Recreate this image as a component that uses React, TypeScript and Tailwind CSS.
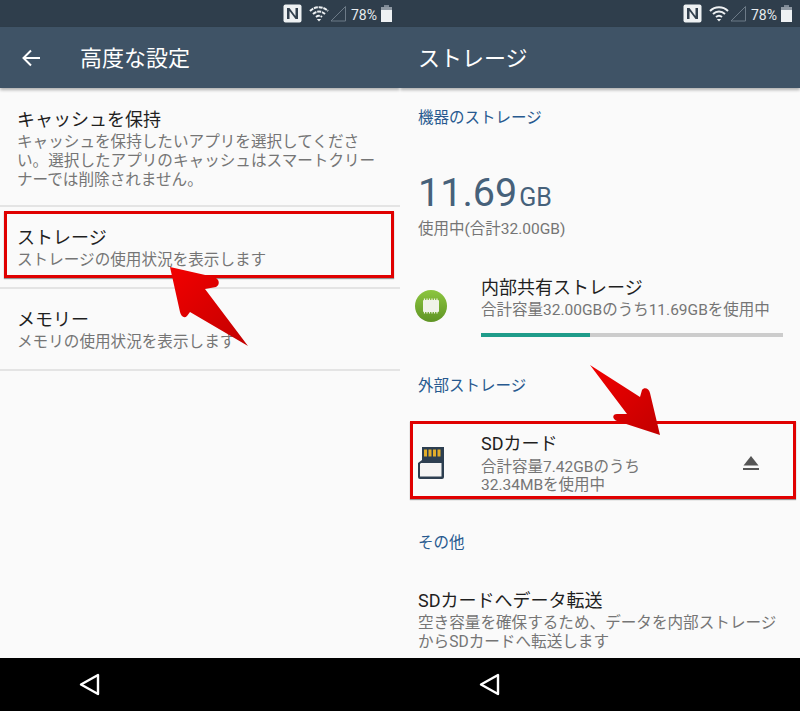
import React from "react";

const font = { fontFamily: 'Roboto, "Noto Sans CJK JP", sans-serif' };

function StatusBar({ dim }: { dim?: boolean }) {
  return (
    <div className="h-[27px] bg-[#2f3e4c] flex items-center justify-end pr-[8px] text-[#e8ecef]">
      <svg width="19" height="19" viewBox="0 0 19 19" className="mr-[7px]">
        <rect x="0.500" y="0.500" width="18" height="18" rx="2" fill="#eef1f3" />
        <path d="M4 15V4h2.500l6 8V4H15v11h-2.500l-6-8v8z" fill="#33414f" />
      </svg>
      <svg width="20" height="17" viewBox="0 0 20 17" className="mr-[1px]">
        <path d="M1 6c5-5 13-5 18 0M4 9c3.500-3.300 8.500-3.300 12 0M7 12c1.800-1.500 4.200-1.500 6 0" stroke="#eef1f3" strokeWidth="2" fill="none" strokeDasharray={dim ? "4 0.800" : undefined} />
        <path d="M7.800 14l2.200 2.500 2.200-2.500z" fill="#eef1f3" />
      </svg>
      <svg width="16" height="17" viewBox="0 0 16 17" className="mr-[5px]">
        <path d="M1 16L15.500 1.500V16z" stroke="#6c7a87" strokeWidth="1" fill="none" />
      </svg>
      <span className="text-[14px] leading-none mr-[4px] mt-[2px]">78%</span>
      <svg width="11" height="17" viewBox="0 0 11 17">
        <rect x="3" y="0" width="5" height="2" fill="#7d8894" />
        <rect x="0" y="2" width="11" height="3" fill="#8f99a3" />
        <rect x="0" y="5" width="11" height="12" fill="#eef1f3" />
      </svg>
    </div>
  );
}

function Item({ title, lines, className = "" }: { title: string; lines: string[]; className?: string }) {
  return (
    <div className={`pr-[10px] ${className}`}>
      <div className="text-[18px] leading-[24px] text-[#1f1f1f]">{title}</div>
      <div className="mt-[1px]">
        {lines.map((l) => (
          <div key={l} className="text-[15.600px] leading-[19px] text-[#757575] whitespace-nowrap">{l}</div>
        ))}
      </div>
    </div>
  );
}

function Divider() {
  return <div className="h-[2px] bg-[#e4e4e4]" />;
}

function Heading({ children, className = "" }: { children: React.ReactNode; className?: string }) {
  return <div className={`px-[18px] text-[15.500px] leading-[20px] text-[#27598f] ${className}`}>{children}</div>;
}

function NavBar() {
  return (
    <div className="h-[53px] bg-black flex items-center pl-[79px] shrink-0">
      <svg width="21" height="23" viewBox="0 0 21 23">
        <path d="M19 2v19L2 11.500z" stroke="#fff" strokeWidth="2.400" fill="none" strokeLinejoin="round" />
      </svg>
    </div>
  );
}

function ChipIcon() {
  return (
    <svg width="32" height="32" viewBox="0 0 32 32">
      <defs>
        <linearGradient id="chipGreen" x1="0" y1="0" x2="0" y2="1">
          <stop offset="0" stopColor="#8cc63f" />
          <stop offset="1" stopColor="#5f9424" />
        </linearGradient>
      </defs>
      <circle cx="16" cy="16" r="16" fill="url(#chipGreen)" />
      <rect x="8" y="10" width="16" height="12" rx="1" fill="#f0f3e8" />
      <path d="M9.500 8.500v2M12 8.500v2M14.500 8.500v2M17 8.500v2M19.500 8.500v2M22 8.500v2M9.500 21.500v2M12 21.500v2M14.500 21.500v2M17 21.500v2M19.500 21.500v2M22 21.500v2" stroke="#f0f3e8" strokeWidth="1.200" />
    </svg>
  );
}

function SdIcon() {
  return (
    <svg width="26" height="32" viewBox="0 0 26 32">
      <path d="M4 0h22v30a2 2 0 0 1-2 2H2a2 2 0 0 1-2-2V16l4-3z" fill="#2c3e50" />
      <path d="M6 2.500h3v7H6zM10.500 2.500h3v7h-3zM15 2.500h3v7h-3zM19.500 2.500h3v7h-3z" fill="#e2ad2a" />
      <path d="M3 16h20.500v13.500H2V17z" fill="#f4f4f4" />
    </svg>
  );
}

function Arrow({ className, d, id }: { className: string; d: string; id: string }) {
  return (
    <svg className={className} viewBox="0 0 90 90" width="90" height="90">
      <defs>
        <linearGradient id={id} x1="0" y1="0" x2="1" y2="1">
          <stop offset="0" stopColor="#f20000" />
          <stop offset="1" stopColor="#c20000" />
        </linearGradient>
      </defs>
      <path d={d} fill={`url(#${id})`} />
    </svg>
  );
}

const toolbar = "h-[61px] shrink-0 bg-[#3f5366] flex items-center text-white shadow-[0_2px_3px_rgba(0,0,0,0.3)] z-10 pt-[3px]";

export default function App() {
  return (
    <div className="relative w-[800px] h-[711px] flex overflow-hidden bg-[#fafafa]" style={font}>
      {/* Left screen */}
      <div className="w-[400px] h-full flex flex-col overflow-hidden">
        <StatusBar dim />
        <div className={toolbar}>
          <svg width="20" height="18" viewBox="0 0 20 18" className="ml-[21px] mb-[3px]">
            <path d="M19 9H2.500M10 1.500L2.500 9l7.500 7.500" stroke="#fff" strokeWidth="2" fill="none" />
          </svg>
          <span className="ml-[39px] text-[22px] leading-none">高度な設定</span>
        </div>
        <div className="flex-1 bg-[#fafafa]">
          <Item
            className="pl-[17px] pt-[20px] h-[117px]"
            title="キャッシュを保持"
            lines={["キャッシュを保持したいアプリを選択してくださ", "い。選択したアプリのキャッシュはスマートクリー", "ナーでは削除されません。"]}
          />
          <Divider />
          <Item className="pl-[17px] pt-[19px] h-[80px]" title="ストレージ" lines={["ストレージの使用状況を表示します"]} />
          <Divider />
          <Item className="pl-[17px] pt-[19px] h-[80px]" title="メモリー" lines={["メモリの使用状況を表示します"]} />
          <Divider />
        </div>
        <NavBar />
      </div>

      {/* Right screen */}
      <div className="w-[400px] h-full flex flex-col overflow-hidden">
        <StatusBar />
        <div className={toolbar}>
          <span className="ml-[18px] text-[22px] leading-none">ストレージ</span>
        </div>
        <div className="flex-1 bg-[#fafafa] overflow-hidden">
          <Heading className="pt-[20px]">機器のストレージ</Heading>
          <div className="px-[18px] mt-[43px] flex items-baseline text-[#46617a] leading-[44px]">
            <span className="text-[39.500px]">11.69</span>
            <span className="text-[25px] ml-[2px]">GB</span>
          </div>
          <div className="px-[18px] text-[15.500px] leading-[20px] mt-[-1px] text-[#757575]">使用中(合計32.00GB)</div>
          <div className="mt-[37px] flex">
            <div className="pl-[15px] w-[81px] pt-[14px]">
              <ChipIcon />
            </div>
            <div className="w-[302px]">
              <div className="text-[18px] leading-[24px] text-[#1f1f1f]">内部共有ストレージ</div>
              <div className="text-[15.500px] leading-[20px] text-[#757575] whitespace-nowrap">合計容量32.00GBのうち11.69GBを使用中</div>
              <div className="mt-[13px] h-[4px] bg-[#cccccc]">
                <div className="h-full w-[36%] bg-[#1f9c8a]" />
              </div>
            </div>
          </div>
          <Heading className="mt-[39px]">外部ストレージ</Heading>
          <div className="mt-[36px] flex items-start h-[60px]">
            <div className="pl-[18px] w-[81px] pt-[15px]">
              <SdIcon />
            </div>
            <div className="flex-1">
              <div className="text-[18px] leading-[24px] text-[#1f1f1f]">SDカード</div>
              <div className="text-[15.500px] leading-[18px] mt-[2px] text-[#757575]">合計容量7.42GBのうち</div>
              <div className="text-[15.500px] leading-[18px] text-[#757575]">32.34MBを使用中</div>
            </div>
            <svg width="18" height="16" viewBox="0 0 18 16" className="mr-[40px] mt-[23px]">
              <path d="M9 1l7.500 9.500h-15z" fill="#555" />
              <rect x="1" y="13" width="16" height="2" fill="#555" />
            </svg>
          </div>
          <Heading className="mt-[41px]">その他</Heading>
          <Item
            className="pl-[18px] mt-[36px]"
            title="SDカードへデータ転送"
            lines={["空き容量を確保するため、データを内部ストレージ", "からSDカードへ転送します"]}
          />
        </div>
        <NavBar />
      </div>

      {/* Annotations */}
      <div className="absolute left-[4px] top-[211px] w-[390px] h-[67px] border-[3px] border-[#e00000] shadow-[0_1px_1px_rgba(0,0,0,0.4)] pointer-events-none" />
      <div className="absolute left-[410px] top-[421px] w-[386px] h-[78px] border-[3px] border-[#e00000] shadow-[0_1px_1px_rgba(0,0,0,0.4)] pointer-events-none" />
      <Arrow
        id="arrowA"
        className="absolute left-[166px] top-[263px]"
        d="M4 4L48 14C54 16 54 22 50 24L39 26L82 83L24 49L21 53C18 56 15 53 14 49z"
      />
      <Arrow
        id="arrowB"
        className="absolute left-[586px] top-[361px]"
        d="M4 4L54 36L56 29C58 26 63 27 64 32L74 74L31 60C26 58 26 53 31 53L41 53z"
      />
    </div>
  );
}
